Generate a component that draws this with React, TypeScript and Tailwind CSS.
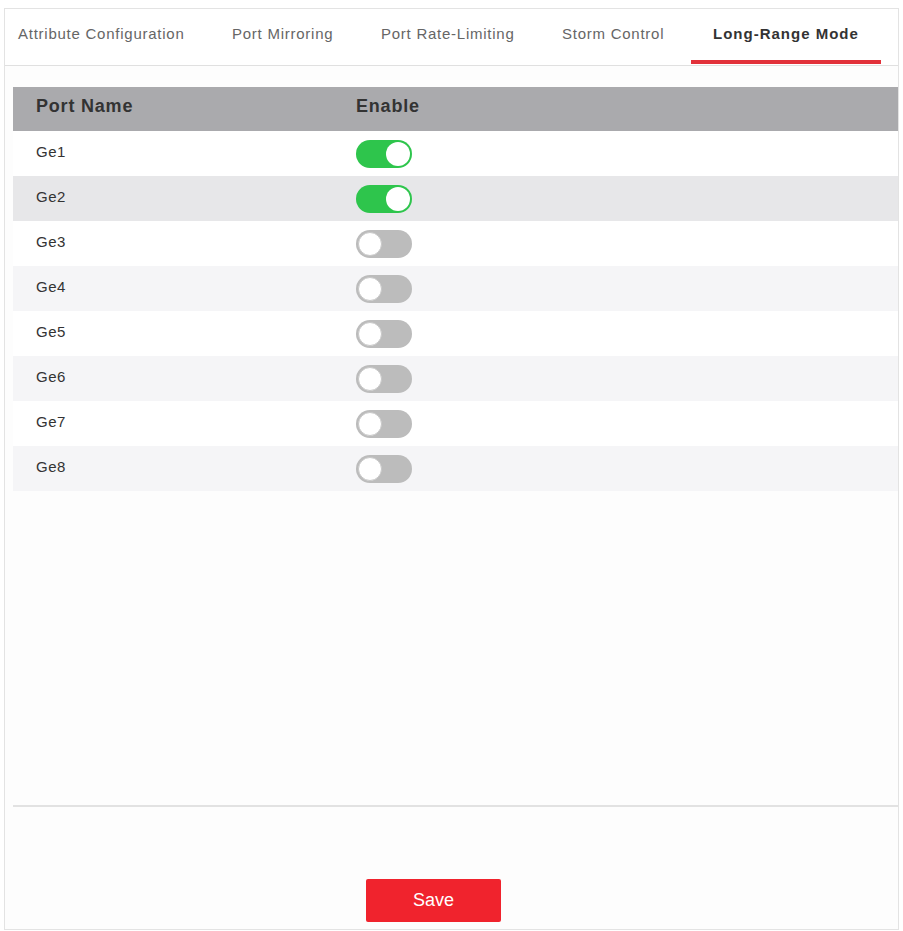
import { useState } from "react";

const tabs = [
  { label: "Attribute Configuration", w: "w-[204px] pl-[13px]" },
  { label: "Port Mirroring", w: "w-[149px] pl-[23px]" },
  { label: "Port Rate-Limiting", w: "w-[181px] pl-[23px]" },
  { label: "Storm Control", w: "w-[151px] pl-[23px]" },
  { label: "Long-Range Mode", w: "w-[192px] pl-[23px]" },
];

const initialPorts = [
  { name: "Ge1", enabled: true },
  { name: "Ge2", enabled: true },
  { name: "Ge3", enabled: false },
  { name: "Ge4", enabled: false },
  { name: "Ge5", enabled: false },
  { name: "Ge6", enabled: false },
  { name: "Ge7", enabled: false },
  { name: "Ge8", enabled: false },
];

function Toggle({ on, onClick }: { on: boolean; onClick: () => void }) {
  return (
    <button
      type="button"
      onClick={onClick}
      className={
        on
          ? "relative flex h-[28px] w-[56px] items-center justify-end rounded-full bg-[#2ec54c] px-[2px]"
          : "relative flex h-[28px] w-[56px] items-center justify-start rounded-full bg-[#bcbcbc] px-[2px]"
      }
    >
      <span
        className={
          on
            ? "h-[24px] w-[24px] rounded-full bg-white"
            : "h-[24px] w-[24px] rounded-full border border-[#c8c8c8] bg-white"
        }
      />
    </button>
  );
}

export default function App() {
  const [active, setActive] = useState(4);
  const [ports, setPorts] = useState(initialPorts);

  const toggle = (i: number) =>
    setPorts((prev) =>
      prev.map((p, idx) => (idx === i ? { ...p, enabled: !p.enabled } : p)),
    );

  return (
    <div
      className="h-[931px] w-[903px] bg-white pl-[4px] pr-[4px] pt-[8px]"
      style={{ fontFamily: '"Liberation Sans", Arial, sans-serif' }}
    >
      <div className="flex h-[922px] flex-col border border-[#e3e3e3] bg-[#fdfdfd]">
        {/* tabs */}
        <div className="flex h-[57px] items-stretch border-b border-[#e0e0e0] bg-white">
          {tabs.map((t, i) => (
            <button
              key={t.label}
              type="button"
              onClick={() => setActive(i)}
              className={
                t.w +
                (i === active
                  ? " relative flex items-center pb-[6px] text-[15px] font-bold tracking-[1px] text-[#333]"
                  : " relative flex items-center pb-[6px] text-[15px] tracking-[0.75px] text-[#666]")
              }
            >
              {t.label}
              {i === active && (
                <span className="absolute bottom-[1px] left-[1px] right-[1px] h-[4px] bg-[#e2313a]" />
              )}
            </button>
          ))}
        </div>

        {/* table */}
        <div className="pl-[8px] pt-[21px]">
          <div className="flex h-[44px] items-center bg-[#aaaaad] pb-[5px] text-[18px] font-bold tracking-[0.8px] text-[#333]">
            <div className="w-[320px] pl-[23px]">Port Name</div>
            <div className="pl-[23px]">Enable</div>
          </div>
          {ports.map((p, i) => (
            <div
              key={p.name}
              className={
                i === 1
                  ? "flex h-[45px] items-center bg-[#e7e7e9] text-[15px] tracking-[0.5px] text-[#333]"
                  : i % 2 === 1
                    ? "flex h-[45px] items-center bg-[#f5f5f7] text-[15px] tracking-[0.5px] text-[#333]"
                    : "flex h-[45px] items-center bg-white text-[15px] tracking-[0.5px] text-[#333]"
              }
            >
              <div className="w-[320px] pb-[3px] pl-[23px]">{p.name}</div>
              <div className="pl-[23px]">
                <Toggle on={p.enabled} onClick={() => toggle(i)} />
              </div>
            </div>
          ))}
        </div>

        <div className="flex-1" />

        <div className="ml-[8px] border-t-2 border-[#e2e2e2]" />

        <div className="h-[122px] pl-[361px] pt-[72px]">
          <button
            type="button"
            className="h-[43px] w-[135px] rounded-[2px] bg-[#f0232d] text-[18px] text-white"
          >
            Save
          </button>
        </div>
      </div>
    </div>
  );
}
